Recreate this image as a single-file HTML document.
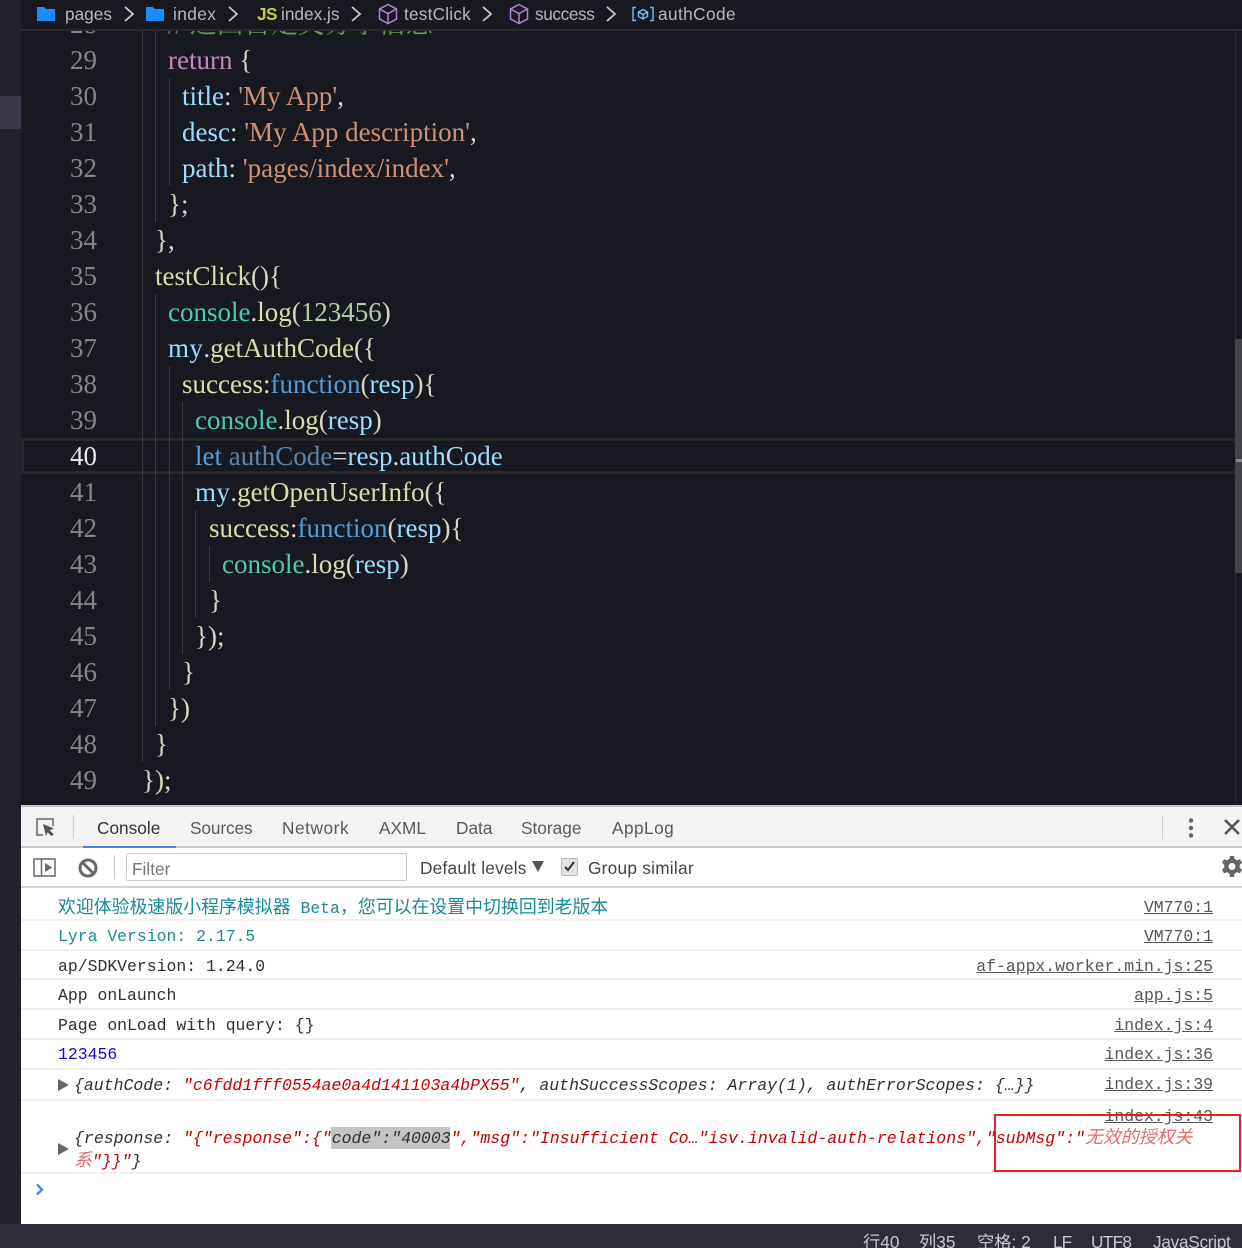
<!DOCTYPE html>
<html><head><meta charset="utf-8"><style>
html,body{margin:0;padding:0;background:#181920}
#p{position:relative;width:1242px;height:1248px;overflow:hidden;background:#181920}
#p div,#p span.a,#p svg{position:absolute}
.c{left:0;height:36px;line-height:36px;font:27px/36px "Liberation Serif","Noto Serif CJK SC",serif;white-space:pre;color:#d4d4d4}
.n{left:40px;width:57px;text-align:right;font:27px/36px "Liberation Serif",serif;color:#858585}
.g{width:1px;background:#3c3c3c}
.k{color:#c586c0}.p{color:#9cdcfe}.s{color:#ce9178}.f{color:#dcdcaa}.t{color:#4ec9b0}.b{color:#569cd6}.d{color:#5f84a8}.w{color:#d7d7c0}.m{color:#b5cea8}
.my{letter-spacing:.4px}
.bc{font:17.25px/28px "Liberation Sans",sans-serif;color:#b8b8b8;top:0;white-space:pre}
.tab{top:814px;font:17.25px/28px "Liberation Sans",sans-serif;color:#5a5a5a;white-space:pre}
.r{font:16.45px/24px "Liberation Mono","Noto Sans CJK SC",monospace;color:#303030;white-space:pre}
.it{font-size:16.5px}
.l{font:16.45px/24px "Liberation Mono",monospace;color:#555;white-space:pre;right:29px;text-decoration:underline}
.sep{left:21px;right:0;height:2px;background:#f0f0f0}
.q{color:#c80000}.z{font-size:17.9px}
i{font-style:italic}
.st{top:1231px;font:17.25px/22px "Liberation Sans","Noto Sans CJK SC",sans-serif;color:#c8c8c8;white-space:pre}
</style></head><body><div id="p">
<div style="left:0;top:0;width:21px;height:1248px;background:#21222c"></div>
<div style="left:0;top:96px;width:21px;height:33px;background:#3a3a4a"></div>

<div class="c" style="left:168px;top:6px;color:#6a9955">// 返回自定义分享信息</div>
<div class="n" style="top:6px">28</div>
<div class="n" style="top:42px">29</div><div class="n" style="top:78px">30</div><div class="n" style="top:114px">31</div><div class="n" style="top:150px">32</div><div class="n" style="top:186px">33</div><div class="n" style="top:222px">34</div><div class="n" style="top:258px">35</div><div class="n" style="top:294px">36</div><div class="n" style="top:330px">37</div><div class="n" style="top:366px">38</div><div class="n" style="top:402px">39</div><div class="n" style="top:438px;color:#e6e6e6">40</div><div class="n" style="top:474px">41</div><div class="n" style="top:510px">42</div><div class="n" style="top:546px">43</div><div class="n" style="top:582px">44</div><div class="n" style="top:618px">45</div><div class="n" style="top:654px">46</div><div class="n" style="top:690px">47</div><div class="n" style="top:726px">48</div><div class="n" style="top:762px">49</div>

<div style="left:21px;top:438px;width:1214px;height:30px;border:3px solid #282828"></div>

<div class="g" style="left:142px;top:30px;height:732px"></div>
<div class="g" style="left:155px;top:30px;height:192px"></div>
<div class="g" style="left:155px;top:294px;height:432px"></div>
<div class="g" style="left:169px;top:78px;height:108px"></div>
<div class="g" style="left:169px;top:366px;height:324px"></div>
<div class="g" style="left:182px;top:402px;height:252px"></div>
<div class="g" style="left:195px;top:510px;height:108px"></div>
<div class="g" style="left:209px;top:546px;height:36px"></div>

<div class="c" style="left:168px;top:42px"><span class="k">return</span> <span class="w">{</span></div>
<div class="c" style="left:182px;top:78px"><span class="p">title</span>: <span class="s">'My App'</span>,</div>
<div class="c" style="left:182px;top:114px"><span class="p">desc</span>: <span class="s">'My App description'</span>,</div>
<div class="c" style="left:182px;top:150px"><span class="p">path</span>: <span class="s">'pages/index/index'</span>,</div>
<div class="c" style="left:168px;top:186px"><span class="w">}</span>;</div>
<div class="c" style="left:155px;top:222px"><span class="w">}</span>,</div>
<div class="c" style="left:155px;top:258px"><span class="f">testClick</span><span class="w">(){</span></div>
<div class="c" style="left:168px;top:294px"><span class="t">console</span>.<span class="f">log</span><span class="w">(</span><span class="m">123456</span><span class="w">)</span></div>
<div class="c" style="left:168px;top:330px"><span class="p my">my</span>.<span class="f">getAuthCode</span><span class="w">({</span></div>
<div class="c" style="left:182px;top:366px"><span class="f">success</span>:<span class="b">function</span><span class="w">(</span><span class="p">resp</span><span class="w">){</span></div>
<div class="c" style="left:195px;top:402px"><span class="t">console</span>.<span class="f">log</span><span class="w">(</span><span class="p">resp</span><span class="w">)</span></div>
<div class="c" style="left:195px;top:438px"><span class="b">let</span> <span class="d">authCode</span>=<span class="p">resp</span>.<span class="p">authCode</span></div>
<div class="c" style="left:195px;top:474px"><span class="p my">my</span>.<span class="f">getOpenUserInfo</span><span class="w">({</span></div>
<div class="c" style="left:209px;top:510px"><span class="f">success</span>:<span class="b">function</span><span class="w">(</span><span class="p">resp</span><span class="w">){</span></div>
<div class="c" style="left:222px;top:546px"><span class="t">console</span>.<span class="f">log</span><span class="w">(</span><span class="p">resp</span><span class="w">)</span></div>
<div class="c w" style="left:209px;top:582px">}</div>
<div class="c w" style="left:195px;top:618px">});</div>
<div class="c w" style="left:182px;top:654px">}</div>
<div class="c w" style="left:168px;top:690px">})</div>
<div class="c w" style="left:155px;top:726px">}</div>
<div class="c w" style="left:142px;top:762px">});</div>

<div style="left:1235px;top:30px;width:1px;height:775px;background:#2c2c2c"></div>
<div style="left:1235px;top:339px;width:7px;height:234px;background:#434347"></div>
<div style="left:1236px;top:459px;width:6px;height:3px;background:#8a8a8a"></div>

<div style="left:21px;top:0;width:1221px;height:29px;background:#181920"></div>
<div style="left:21px;top:29px;width:1221px;height:2px;background:#2a2a2e"></div>
<svg style="left:37px;top:6px" width="18" height="15" viewBox="0 0 18 15"><path fill="#1a8cff" d="M0 1h7l2 2h9v12H0z"/></svg>
<div class="bc" style="left:65px">pages</div>
<svg style="left:122px;top:5px" width="14" height="18" viewBox="0 0 14 18"><path fill="none" stroke="#c8c8c8" stroke-width="1.8" d="M3 2l8 7-8 7"/></svg>
<svg style="left:146px;top:6px" width="18" height="15" viewBox="0 0 18 15"><path fill="#1a8cff" d="M0 1h7l2 2h9v12H0z"/></svg>
<div class="bc" style="left:173px;letter-spacing:.4px">index</div>
<svg style="left:226px;top:5px" width="14" height="18" viewBox="0 0 14 18"><path fill="none" stroke="#c8c8c8" stroke-width="1.8" d="M3 2l8 7-8 7"/></svg>
<div class="bc" style="left:257px;font-weight:bold;color:#cbcb41;letter-spacing:-.6px">JS</div>
<div class="bc" style="left:281px">index.js</div>
<svg style="left:349px;top:5px" width="14" height="18" viewBox="0 0 14 18"><path fill="none" stroke="#c8c8c8" stroke-width="1.8" d="M3 2l8 7-8 7"/></svg>
<svg style="left:378px;top:3px" width="20" height="22" viewBox="0 0 20 22"><path fill="none" stroke="#b180d7" stroke-width="1.5" d="M10 1.5l8.5 4.5v10L10 20.5 1.5 16V6zM1.5 6L10 10.5 18.5 6M10 10.5v10"/></svg>
<div class="bc" style="left:404px;letter-spacing:.2px">testClick</div>
<svg style="left:480px;top:5px" width="14" height="18" viewBox="0 0 14 18"><path fill="none" stroke="#c8c8c8" stroke-width="1.8" d="M3 2l8 7-8 7"/></svg>
<svg style="left:509px;top:3px" width="20" height="22" viewBox="0 0 20 22"><path fill="none" stroke="#b180d7" stroke-width="1.5" d="M10 1.5l8.5 4.5v10L10 20.5 1.5 16V6zM1.5 6L10 10.5 18.5 6M10 10.5v10"/></svg>
<div class="bc" style="left:535px;letter-spacing:-.4px">success</div>
<svg style="left:604px;top:5px" width="14" height="18" viewBox="0 0 14 18"><path fill="none" stroke="#c8c8c8" stroke-width="1.8" d="M3 2l8 7-8 7"/></svg>
<svg style="left:632px;top:6px" width="22" height="16" viewBox="0 0 22 16"><path fill="none" stroke="#75beff" stroke-width="1.4" d="M4 1.5H1v13h3M18 1.5h3v13h-3M11 3.5l4.500 2.500v4.500L11 13l-4.500-2.500V6zM6.500 6l4.500 2.500L15.500 6M11 8.500V13"/></svg>
<div class="bc" style="left:658px;letter-spacing:.4px">authCode</div>

<div style="left:21px;top:805px;width:1221px;height:419px;background:#fff"></div>
<div style="left:21px;top:805px;width:1221px;height:2px;background:#c8c8c8"></div>
<div style="left:21px;top:807px;width:1221px;height:39px;background:#f3f3f3"></div>
<div style="left:21px;top:846px;width:1221px;height:2px;background:#ccc"></div>
<div style="left:83px;top:846px;width:93px;height:2px;background:#3f87f5"></div>
<svg style="left:35px;top:817px" width="22" height="22" viewBox="0 0 22 22"><path fill="none" stroke="#666" stroke-width="1.500" d="M8 18H2V2h16v7"/><path fill="#555" d="M8 7l11 4.500-4.300 1.800 4 4-2 2-4-4L11 19z"/></svg>
<div style="left:73px;top:815px;width:1px;height:24px;background:#ccc"></div>
<div class="tab" style="left:97px;color:#333">Console</div>
<div class="tab" style="left:190px;letter-spacing:-.1px">Sources</div>
<div class="tab" style="left:282px;letter-spacing:.55px">Network</div>
<div class="tab" style="left:379px">AXML</div>
<div class="tab" style="left:456px">Data</div>
<div class="tab" style="left:521px">Storage</div>
<div class="tab" style="left:612px;letter-spacing:.45px">AppLog</div>
<div style="left:1162px;top:815px;width:1px;height:24px;background:#ccc"></div>
<svg style="left:1186px;top:817px" width="10" height="22" viewBox="0 0 10 22"><circle cx="5" cy="3.500" r="2.200" fill="#666"/><circle cx="5" cy="11" r="2.200" fill="#666"/><circle cx="5" cy="18.500" r="2.200" fill="#666"/></svg>
<svg style="left:1223px;top:818px" width="18" height="18" viewBox="0 0 18 18"><path stroke="#555" stroke-width="2.600" d="M2 2l14 14M16 2L2 16"/></svg>

<svg style="left:33px;top:858px" width="24" height="20" viewBox="0 0 24 20"><path fill="none" stroke="#666" stroke-width="1.500" d="M1 1h21v17H1zM8.500 1v17"/><path fill="#666" d="M12 5l7 4.500-7 4.500z"/></svg>
<svg style="left:77px;top:857px" width="22" height="22" viewBox="0 0 22 22"><circle cx="11" cy="11" r="8" fill="none" stroke="#666" stroke-width="3"/><path stroke="#666" stroke-width="3" d="M5.500 5.500l11 11"/></svg>
<div style="left:114px;top:855px;width:1px;height:24px;background:#ccc"></div>
<div style="left:126px;top:853px;width:279px;height:26px;border:1.500px solid #ccc;border-radius:2px;background:#fff"></div>
<div class="tab" style="left:132px;top:855px;color:#777">Filter</div>
<div class="tab" style="left:420px;top:854px;color:#444;letter-spacing:.22px">Default levels</div>
<svg style="left:532px;top:861px" width="12" height="11" viewBox="0 0 12 11"><path fill="#555" d="M0 0h12L6 11z"/></svg>
<div style="left:561px;top:858px;width:15px;height:16px;background:#e2e2e2;border:1px solid #bbb;border-radius:2px"></div>
<svg style="left:563px;top:860px" width="13" height="13" viewBox="0 0 13 13"><path fill="none" stroke="#333" stroke-width="2" d="M2 7l3 3 6-8"/></svg>
<div class="tab" style="left:588px;top:854px;color:#444;letter-spacing:.25px">Group similar</div>
<svg style="left:1221px;top:855px" width="22" height="24" viewBox="0 0 22 24"><path fill="#666" fill-rule="evenodd" d="M9 1h4l.7 3 2.300 1.300 3-1 2 3.500-2.300 2.200v2.500L21 14.700l-2 3.500-3-1L13.700 18.500 13 22H9l-.7-3.500L6 17.200l-3 1-2-3.500L3.300 12.500V10L1 7.800l2-3.500 3 1L8.300 4zM11 8a3.500 3.500 0 1 0 0 7 3.500 3.500 0 0 0 0-7z"/></svg>
<div style="left:21px;top:886px;width:1221px;height:2px;background:#d4d4d4"></div>

<div class="sep" style="top:919px"></div><div class="sep" style="top:949px"></div><div class="sep" style="top:978px"></div><div class="sep" style="top:1008px"></div><div class="sep" style="top:1038px"></div><div class="sep" style="top:1068px"></div><div class="sep" style="top:1099px"></div><div class="sep" style="top:1172px"></div>

<div class="r" style="left:58px;top:897px;color:#1a8a94"><span class="z">欢迎体验极速版小程序模拟器</span> Beta<span class="z">，您可以在设置中切换回到老版本</span></div>
<div class="r" style="left:58px;top:925px;color:#1a8a94">Lyra Version: 2.17.5</div>
<div class="r" style="left:58px;top:955px">ap/SDKVersion: 1.24.0</div>
<div class="r" style="left:58px;top:984px">App onLaunch</div>
<div class="r" style="left:58px;top:1014px">Page onLoad with query: {}</div>
<div class="r" style="left:58px;top:1043px;color:#1c00cf">123456</div>
<svg style="left:58px;top:1079px" width="11" height="12" viewBox="0 0 11 12"><path fill="#666" d="M0 0l11 6-11 6z"/></svg>
<div class="r it" style="left:74px;top:1074px"><i>{authCode: <span class="q">"c6fdd1fff0554ae0a4d141103a4bPX55"</span>, authSuccessScopes: Array(1), authErrorScopes: {…}}</i></div>
<div style="left:331px;top:1127px;width:119px;height:22px;background:#c4c4c4"></div>
<svg style="left:58px;top:1143px" width="11" height="12" viewBox="0 0 11 12"><path fill="#666" d="M0 0l11 6-11 6z"/></svg>
<div class="r" style="left:74px;top:1127px;font-size:16.52px"><i>{response: <span class="q">"{"response":{"</span>code":"40003<span class="q">","msg":"Insufficient Co…"isv.invalid-auth-relations","subMsg":"<span class="z" style="color:#e26a6a">无效的授权关</span></span></i></div>
<div class="r" style="left:74px;top:1150px;font-size:16.52px"><i><span class="q"><span class="z" style="color:#e26a6a">系</span>"}}"</span>}</i></div>

<div class="l" style="top:896px">VM770:1</div>
<div class="l" style="top:925px">VM770:1</div>
<div class="l" style="top:955px">af-appx.worker.min.js:25</div>
<div class="l" style="top:984px">app.js:5</div>
<div class="l" style="top:1014px">index.js:4</div>
<div class="l" style="top:1043px">index.js:36</div>
<div class="l" style="top:1073px">index.js:39</div>
<div class="l" style="top:1105px">index.js:43</div>

<div style="left:994px;top:1114px;width:243px;height:54px;border:2px solid #ed1c24"></div>
<svg style="left:35px;top:1183px" width="10" height="13" viewBox="0 0 10 13"><path fill="none" stroke="#3f87f5" stroke-width="2.400" d="M2 1.500l5 5-5 5"/></svg>

<div style="left:0;top:1224px;width:1242px;height:24px;background:#2e2e3a"></div>
<div class="st" style="left:863px">行40</div>
<div class="st" style="left:919px">列35</div>
<div class="st" style="left:977px">空格: 2</div>
<div class="st" style="left:1053px;letter-spacing:-1px">LF</div>
<div class="st" style="left:1091px;letter-spacing:-.7px">UTF8</div>
<div class="st" style="left:1153px;letter-spacing:-.3px">JavaScript</div>
</div></body></html>
